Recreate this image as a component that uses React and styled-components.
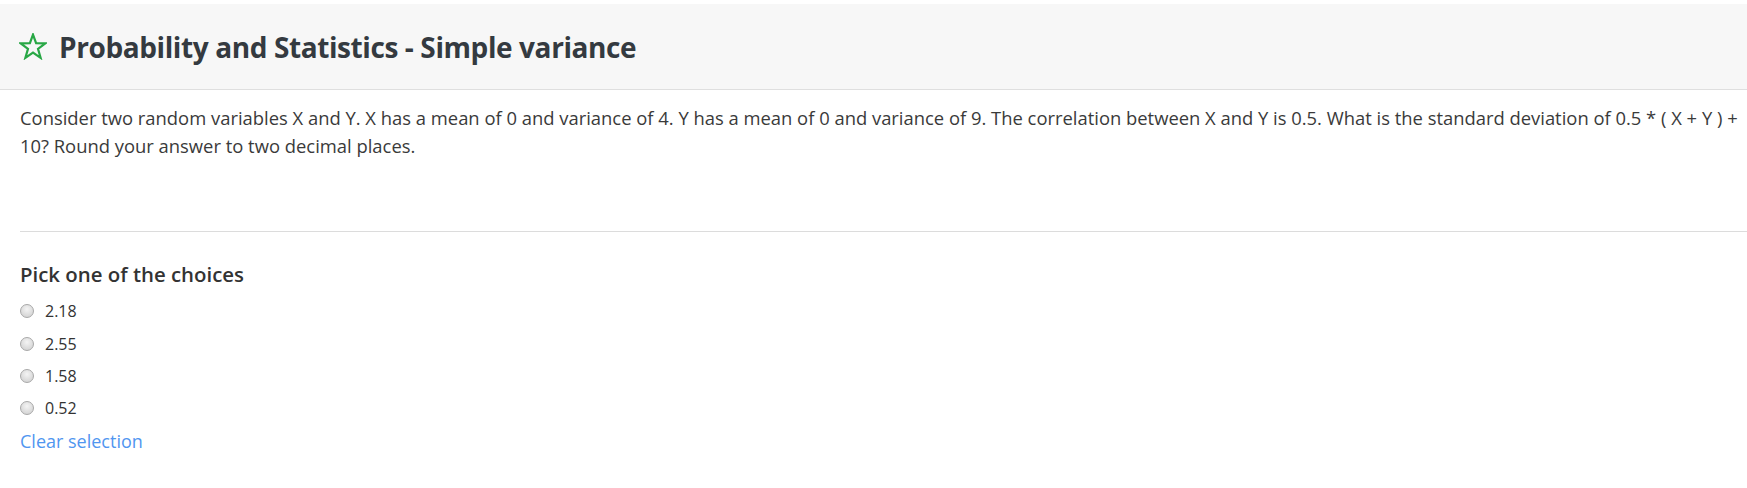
import styled, { createGlobalStyle } from 'styled-components';

const GlobalStyle = createGlobalStyle`
    body {
        margin: 0;
        background: #ffffff;
        font-family: "Open Sans", "Noto Sans", sans-serif;
        color: #333333;
    }
`;

const Page = styled.div`
    padding-top: 4px;
`;

const Header = styled.header`
    display: flex;
    align-items: center;
    gap: 12px;
    height: 86px;
    box-sizing: border-box;
    padding-left: 19px;
    background-color: #f7f7f7;
    border-bottom: 1px solid #dfdfdf;

    h1 {
        margin: 0;
        font-size: 28px;
        font-weight: 700;
        color: #343a40;
        letter-spacing: -0.4px;
    }
`;

const Body = styled.main`
    padding-left: 20px;
`;

const Question = styled.p`
    margin: 14px 0 0;
    font-size: 18.4px;
    line-height: 28px;
    color: #3a3a3a;
    min-height: 127px;
`;

const Divider = styled.hr`
    margin: 0;
    border: none;
    border-top: 1px solid #dcdcdc;
`;

const ChoiceTitle = styled.h2`
    margin: 29px 0 8px;
    font-size: 20.4px;
    line-height: 26px;
    font-weight: 600;
    color: #333333;
`;

const Choices = styled.div`
    display: flex;
    flex-direction: column;
`;

const Choice = styled.label`
    display: flex;
    align-items: center;
    gap: 11px;
    height: 32.4px;
    font-size: 16px;
    color: #333333;
    cursor: pointer;
`;

const Radio = styled.span`
    width: 12px;
    height: 12px;
    border-radius: 50%;
    border: 1px solid #a8a8a8;
    background: radial-gradient(circle at 50% 35%, #f4f4f4 0%, #dcdcdc 60%, #cfcfcf 100%);
`;

const ClearLink = styled.a`
    display: block;
    height: 32px;
    line-height: 32px;
    font-size: 18px;
    color: #5096f0;
    text-decoration: none;
    cursor: pointer;
`;

function StarIcon() {
    return (
        <svg width="28" height="27" viewBox="0 0 28 27" fill="none">
            <path
                d="M14 1.6 L17.1 10.2 L26.3 10.4 L19 15.9 L21.6 24.8 L14 19.5 L6.4 24.8 L9 15.9 L1.7 10.4 L10.9 10.2 Z"
                stroke="#28a745"
                strokeWidth="2.2"
                strokeLinejoin="miter"
            />
        </svg>
    );
}

const choices = ['2.18', '2.55', '1.58', '0.52'];

export default function App() {
    return (
        <Page>
            <GlobalStyle />
            <Header>
                <StarIcon />
                <h1>Probability and Statistics - Simple variance</h1>
            </Header>
            <Body>
                <Question>
                    Consider two random variables X and Y. X has a mean of 0 and variance of 4. Y has a mean of 0 and variance of 9. The correlation between X and Y is 0.5. What is the standard deviation of 0.5 * ( X + Y ) + 10? Round your answer to two decimal places.
                </Question>
                <Divider />
                <ChoiceTitle>Pick one of the choices</ChoiceTitle>
                <Choices>
                    {choices.map((c) => (
                        <Choice key={c}>
                            <Radio />
                            {c}
                        </Choice>
                    ))}
                </Choices>
                <ClearLink>Clear selection</ClearLink>
            </Body>
        </Page>
    );
}
